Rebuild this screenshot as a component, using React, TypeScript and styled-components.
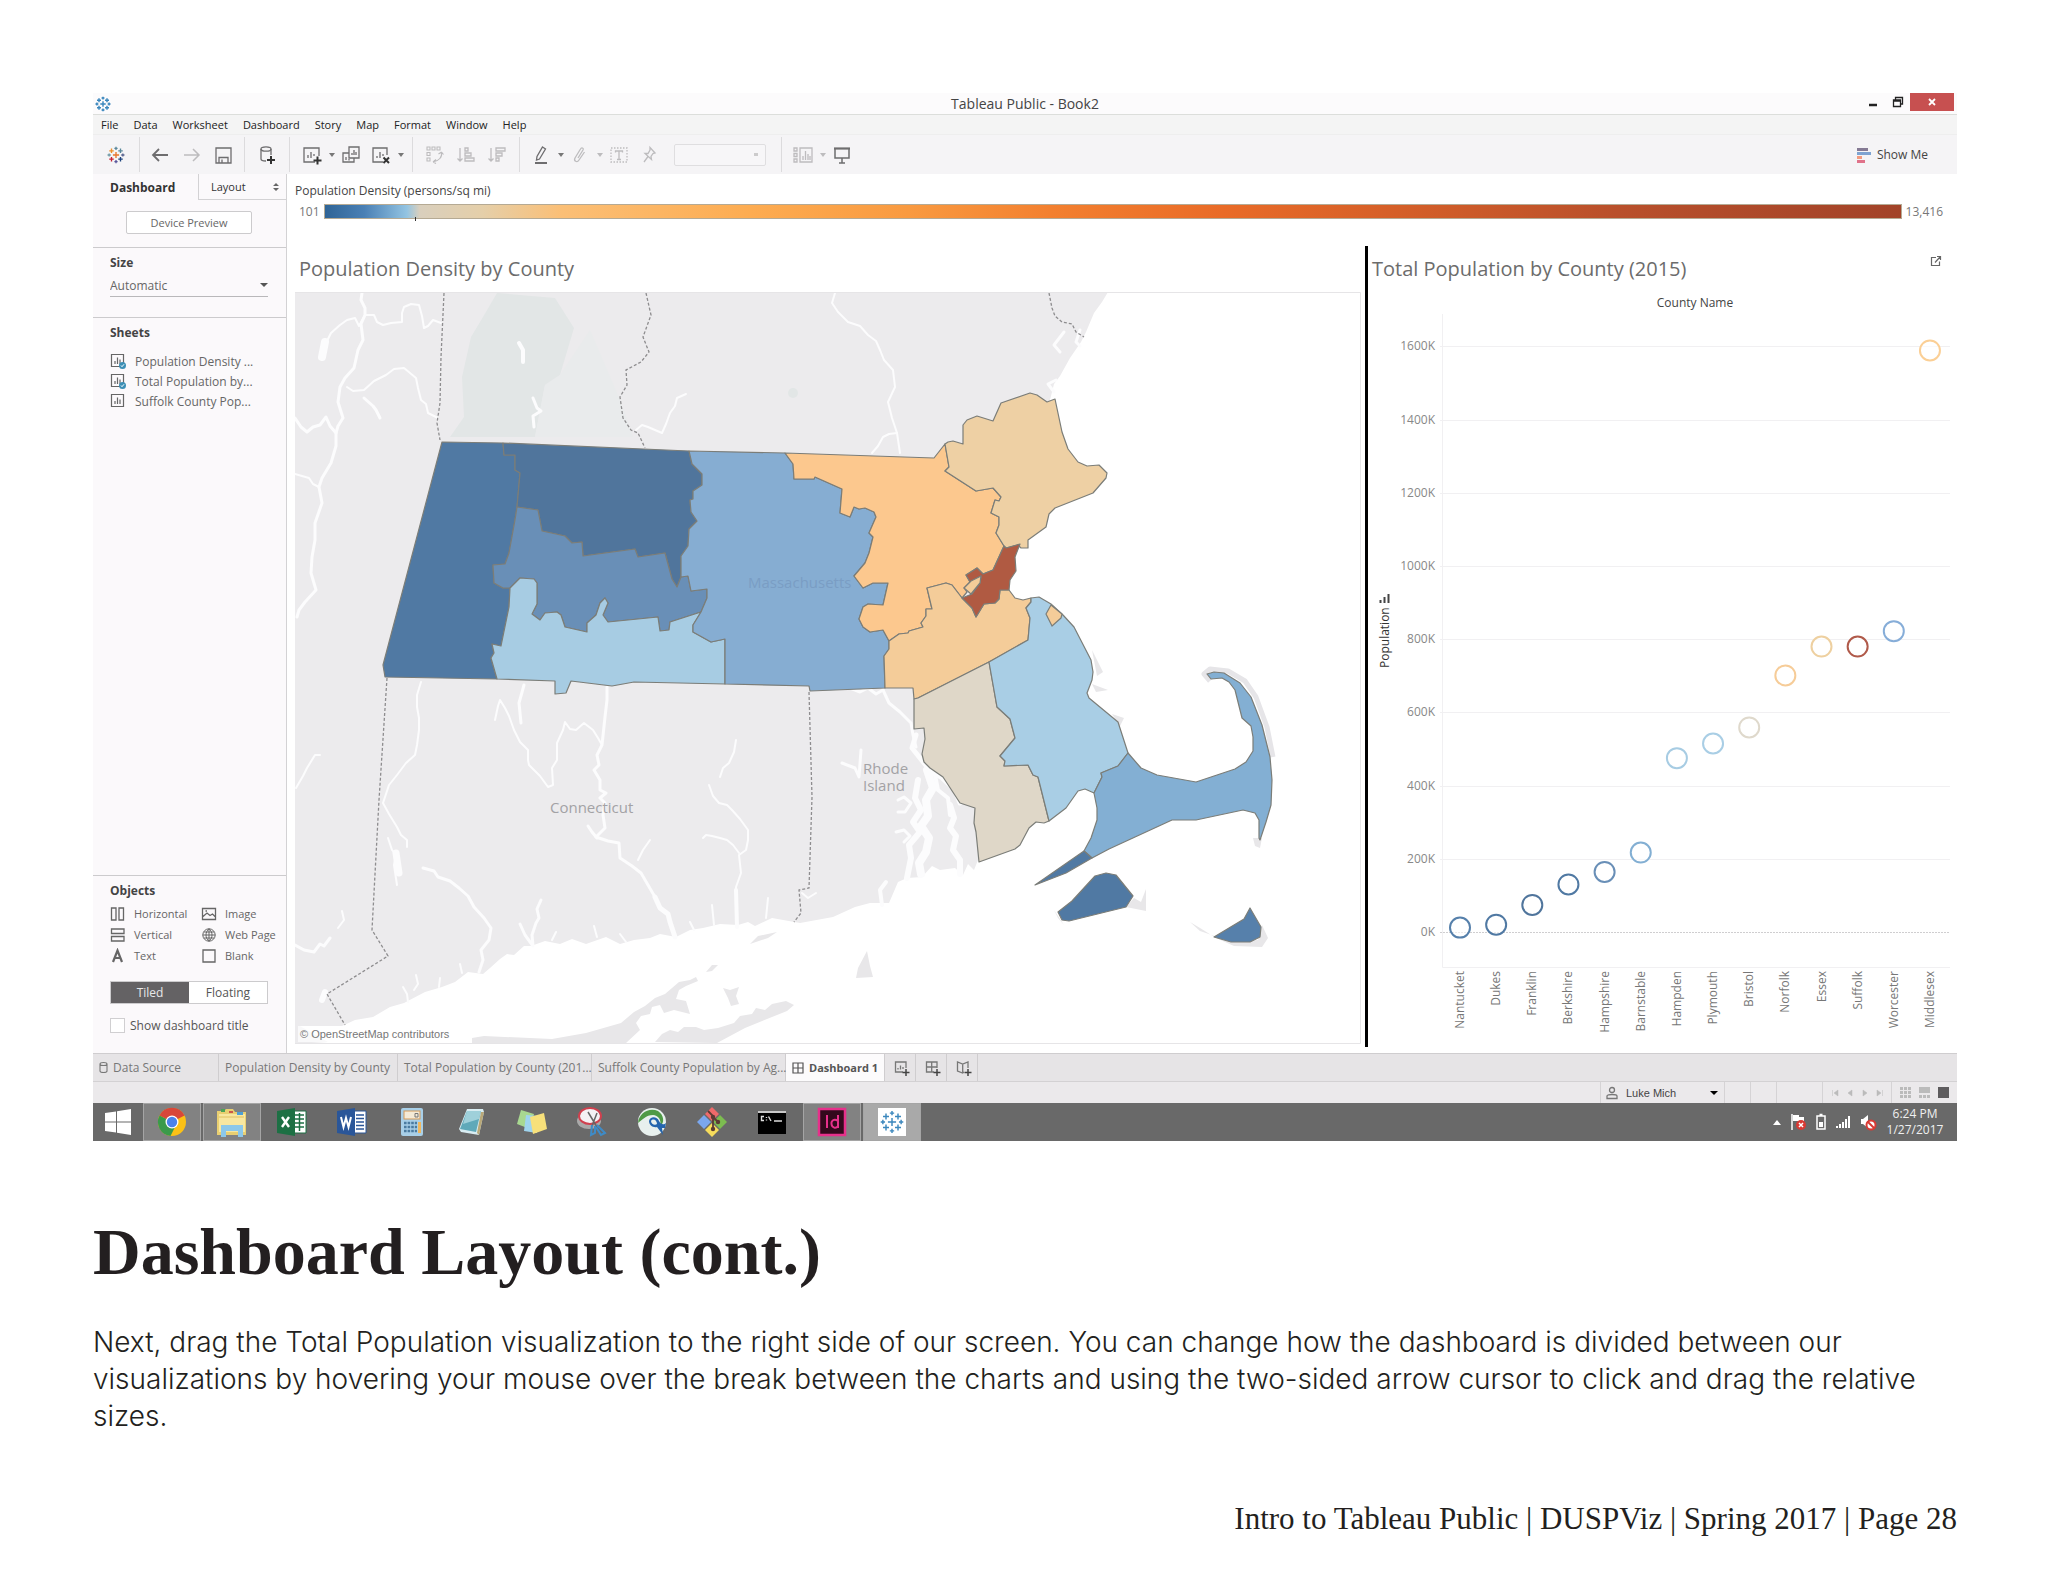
import React from "react";
import styled, { createGlobalStyle, css } from "styled-components";

const GlobalStyle = createGlobalStyle`
  *, *::before, *::after { box-sizing: border-box; }
  body { margin: 0; background: #fff; }
  button, select, input { font: inherit; color: inherit; margin: 0; }
`;

const ui = `"Open Sans", "Noto Sans", sans-serif`;

/* ---------- page ---------- */

const Page = styled.main`
  padding: 93px 91px 48px 93px;
  font-family: ${ui};
`;

const Heading = styled.h1`
  margin: 73px 0 0;
  font: 700 66px/76px "Liberation Serif", serif;
  color: #231f20;
`;

const Paragraph = styled.p`
  margin: 34px 0 0;
  font: 300 28px/37px Inter, "Liberation Sans", sans-serif;
  color: #231f20;
`;

const Footer = styled.footer`
  margin-top: 64px;
  text-align: right;
  font: 400 31px/40px "Liberation Serif", serif;
  color: #231f20;
`;

/* ---------- application window ---------- */

const Window = styled.section`
  background: #fff;
  color: #444;
`;

const TitleBar = styled.header`
  display: grid;
  grid-template-columns: 1fr auto 1fr;
  align-items: center;
  height: 22px;
  background: #fcfbfc;
  border-bottom: 1px solid #dcdedb;
`;

const AppMark = styled.span`
  display: flex;
  padding-left: 2px;
`;

const WindowTitle = styled.span`
  font-size: 14px;
  line-height: 20px;
  color: #444;
`;

const WindowControls = styled.div`
  display: flex;
  justify-content: flex-end;
  align-items: flex-start;
  height: 21px;
  padding-right: 3px;
`;

const WindowButton = styled.button<{ $close?: boolean }>`
  display: flex;
  align-items: center;
  justify-content: center;
  width: ${(p) => (p.$close ? 44 : 25)}px;
  height: 18px;
  padding: 0;
  border: 0;
  color: ${(p) => (p.$close ? "#fff" : "#222")};
  background: ${(p) => (p.$close ? "#c75050" : "transparent")};
`;

const MenuBar = styled.nav`
  display: flex;
  align-items: center;
  gap: 15px;
  height: 20px;
  padding-left: 8px;
  background: #f4f4f4;
  border-bottom: 1px solid #eeeeee;
`;

const MenuItem = styled.button`
  padding: 0;
  border: 0;
  background: none;
  font-size: 11px;
  line-height: 18px;
  color: #222;
`;

const ToolBar = styled.div`
  display: flex;
  height: 39px;
  padding: 2px 0;
  background: #f5f4f6;
`;

const ToolGroup = styled.div<{ $pad?: number; $gap?: number; $last?: boolean }>`
  display: flex;
  align-items: center;
  gap: ${(p) => p.$gap ?? 0}px;
  padding: 0 ${(p) => p.$pad ?? 6}px;
  border-right: ${(p) => (p.$last ? "0" : "1px solid #dcdbdd")};
`;

const ToolButton = styled.button<{ $dim?: boolean }>`
  display: flex;
  align-items: center;
  justify-content: center;
  width: 30px;
  height: 28px;
  padding: 0;
  border: 0;
  background: none;
  color: ${(p) => (p.$dim ? "#bdbcbe" : "#6e6d6f")};
`;

const Caret = styled.span<{ $dim?: boolean }>`
  width: 9px;
  display: flex;
  justify-content: center;
  &::after {
    content: "";
    border: 3px solid transparent;
    border-top: 4px solid ${(p) => (p.$dim ? "#bdbcbe" : "#777")};
    border-bottom: 0;
  }
`;

const ToolSelect = styled.select`
  width: 92px;
  height: 22px;
  margin: 0 9px 0 10px;
  border: 1px solid #d6d5d7;
  border-radius: 2px;
  appearance: none;
  background: #f8f7f9 linear-gradient(#bbb, #bbb) no-repeat right 7px center / 4px 3px;
`;

const ShowMe = styled.button`
  display: flex;
  align-items: center;
  gap: 6px;
  margin-left: auto;
  padding: 0 29px 0 0;
  border: 0;
  background: none;
  font-size: 12px;
  color: #444;
`;

const Workspace = styled.div`
  display: grid;
  grid-template-columns: 194px minmax(0, 1fr);
`;

/* ---------- side bar ---------- */

const SideBar = styled.aside`
  display: flex;
  flex-direction: column;
  background: #fbf9fb;
  border-right: 1px solid #d3d2d4;
`;

const SideTabs = styled.div`
  display: grid;
  grid-template-columns: 105px 1fr;
  height: 26px;
`;

const SideTab = styled.button<{ $active?: boolean }>`
  display: flex;
  align-items: center;
  justify-content: space-between;
  padding: 0 7px 0 ${(p) => (p.$active ? 17 : 12)}px;
  border: 0;
  background: none;
  font-size: ${(p) => (p.$active ? 12 : 11)}px;
  font-weight: ${(p) => (p.$active ? 700 : 400)};
  color: #333;
  ${(p) =>
    !p.$active &&
    css`
      border-left: 1px solid #d3d2d4;
      border-bottom: 1px solid #d3d2d4;
    `}
`;

const PreviewArea = styled.div`
  padding: 11px 0 13px 33px;
  border-bottom: 1px solid #cccbcd;
`;

const PreviewButton = styled.button`
  display: block;
  width: 126px;
  height: 23px;
  padding: 0;
  border: 1px solid #cccbcd;
  border-radius: 2px;
  background: #fff;
  font-size: 11px;
  color: #666;
`;

const Section = styled.section<{ $bottom?: number; $last?: boolean }>`
  padding: 6px 17px ${(p) => p.$bottom ?? 0}px;
  ${(p) => (p.$last ? "margin-top: auto; border-top" : "border-bottom")}: 1px solid #cccbcd;
`;

const SheetSection = styled.section`
  padding: 6px 17px 0;
`;

const SectionTitle = styled.h2`
  margin: 0;
  font-size: 12px;
  line-height: 17px;
  font-weight: 700;
  color: #444;
`;

const SizeSelect = styled.div`
  position: relative;
  margin-top: 3px;
  width: 158px;
  border-bottom: 1px solid #b9b8ba;
  &::after {
    content: "";
    position: absolute;
    right: 0;
    top: 9px;
    border: 4px solid transparent;
    border-top: 4px solid #555;
    border-bottom: 0;
    pointer-events: none;
  }
  select {
    display: block;
    width: 100%;
    height: 22px;
    padding: 0;
    border: 0;
    background: none;
    appearance: none;
    font-size: 12px;
    color: #666;
  }
`;

const SheetList = styled.ul`
  list-style: none;
  margin: 10px 0 0;
  padding: 0;
`;

const SheetItem = styled.li`
  display: flex;
  align-items: center;
  gap: 9px;
  height: 20px;
  font-size: 12px;
  white-space: nowrap;
  color: #666;
`;

const ObjectGrid = styled.div`
  display: grid;
  grid-template-columns: 91px 1fr;
  grid-auto-rows: 21px;
  margin-top: 4px;
`;

const ObjectItem = styled.button`
  display: flex;
  align-items: center;
  gap: 8px;
  padding: 0;
  border: 0;
  background: none;
  font-size: 11px;
  white-space: nowrap;
  color: #666;
`;

const Toggle = styled.div`
  display: flex;
  width: 158px;
  height: 23px;
  margin-top: 15px;
  border: 1px solid #cccbcd;
`;

const ToggleButton = styled.button<{ $on?: boolean }>`
  flex: 1;
  padding: 0;
  border: 0;
  font-size: 12px;
  line-height: 20px;
  background: ${(p) => (p.$on ? "#646264" : "#fff")};
  color: ${(p) => (p.$on ? "#e8e8e8" : "#555")};
`;

const TitleCheck = styled.label`
  display: flex;
  align-items: center;
  gap: 5px;
  margin: 12px 0 18px;
  font-size: 12px;
  line-height: 19px;
  color: #555;
  input {
    appearance: none;
    width: 15px;
    height: 15px;
    border: 1px solid #d0cfd1;
    background: #fff;
  }
`;

/* ---------- dashboard ---------- */

const Board = styled.div`
  padding: 9px 0 6px 8px;
  background: #fff;
`;

const LegendTitle = styled.div`
  font-size: 12px;
  line-height: 16px;
  color: #444;
`;

const LegendRow = styled.div`
  display: flex;
  align-items: center;
  gap: 4px;
  height: 15px;
  margin: 5px 14px 27px 4px;
  font-size: 12px;
  line-height: 15px;
  color: #777;
`;

const LegendBar = styled.div`
  position: relative;
  flex: 1;
  height: 15px;
  border: 1px solid #b5aa94;
  background: linear-gradient(
    90deg,
    #2f6496 0%, #4a80b5 2.5%, #93c4e2 5.2%, #d9cfbd 6%, #e5cfa9 10%,
    #fbbf76 15%, #fdac51 27%, #f99a40 37%, #f3802f 46%, #e96b27 57%,
    #d55f28 68%, #b9502b 82%, #a24328 100%
  );
  &::after {
    content: "";
    position: absolute;
    left: calc(6% - 4px);
    bottom: -3px;
    width: 1px;
    height: 4px;
    background: #333;
  }
`;

const Sheets = styled.div`
  display: grid;
  grid-template-columns: minmax(0, 1070fr) 3px minmax(0, 589fr);
`;

const Divider = styled.div`
  background: #000;
`;

const SheetTitle = styled.h3`
  margin: 0;
  padding: 9px 4px;
  font-size: 20px;
  line-height: 28px;
  font-weight: 400;
  color: #6c6c6c;
`;

const ChartHead = styled.div`
  display: flex;
  justify-content: space-between;
  align-items: flex-start;
  padding-right: 15px;
  color: #666;
`;

const OpenButton = styled.button`
  display: flex;
  margin-top: 9px;
  padding: 0;
  border: 0;
  background: none;
`;

const MapFrame = styled.div`
  padding: 0 4px 3px 0;
  svg {
    display: block;
    width: 100%;
    height: auto;
  }
`;

const ChartFrame = styled.div`
  svg {
    display: block;
    width: 100%;
    height: auto;
  }
`;

/* ---------- sheet tabs, status row, task bar ---------- */

const TabRow = styled.div`
  display: flex;
  height: 29px;
  background: #e6e4e6;
  border-top: 1px solid #cfcdcf;
  border-bottom: 1px solid #d3d1d3;
`;

const Tab = styled.button<{ $w: number; $active?: boolean; $center?: boolean }>`
  display: flex;
  align-items: center;
  justify-content: ${(p) => (p.$center ? "center" : "flex-start")};
  gap: 5px;
  width: ${(p) => p.$w}px;
  padding: 0 0 0 ${(p) => (p.$center ? 4 : 6)}px;
  border: 0;
  border-right: 1px solid #cfcdcf;
  background: ${(p) => (p.$active ? "#fcfbfc" : "transparent")};
  font-size: ${(p) => (p.$active ? 11 : 12)}px;
  font-weight: ${(p) => (p.$active ? 700 : 400)};
  white-space: nowrap;
  color: ${(p) => (p.$active ? "#555" : "#777")};
`;

const StatusRow = styled.div`
  display: flex;
  justify-content: flex-end;
  height: 21px;
  background: #ebe9eb;
`;

const StatusCell = styled.div<{ $w: number; $spread?: boolean }>`
  display: flex;
  align-items: center;
  justify-content: ${(p) => (p.$spread ? "space-around" : "flex-start")};
  width: ${(p) => p.$w}px;
  padding: 0 4px;
  border-left: 1px solid #d5d3d5;
  color: #bbb;
`;

const UserSelect = styled.select`
  flex: 1;
  height: 18px;
  padding: 0;
  border: 0;
  appearance: none;
  background: none;
  font: 11px "Liberation Sans", sans-serif;
  color: #444;
`;

const UserIcon = styled.span`
  display: flex;
  width: 21px;
  color: #777;
`;

const UserCaret = styled.span`
  margin-right: 2px;
  border: 4px solid transparent;
  border-top: 4px solid #000;
  border-bottom: 0;
`;

const TaskBar = styled.div`
  display: flex;
  height: 38px;
  background: #696969;
`;

const StartButton = styled.button`
  display: flex;
  align-items: center;
  justify-content: center;
  width: 49px;
  padding: 0;
  border: 0;
  background: none;
`;

const TaskButton = styled.button<{ $open?: boolean; $front?: boolean }>`
  display: flex;
  align-items: center;
  justify-content: center;
  width: 58px;
  margin: 0 1px;
  padding: 0;
  border: ${(p) => (p.$open || p.$front ? "1px solid #a5a5a5" : "0")};
  background: ${(p) => (p.$front ? "#a9a9a9" : p.$open ? "#828282" : "none")};
`;

const Tray = styled.div`
  display: flex;
  align-items: center;
  gap: 8px;
  margin-left: auto;
  padding-right: 12px;
  color: #fff;
`;

const Clock = styled.time`
  width: 60px;
  text-align: center;
  font-size: 12px;
  line-height: 16px;
  color: #f0f0f0;
`;

/* ---------- icons ---------- */

const Svg = ({ w = 20, h = 20, children }: { w?: number; h?: number; children: React.ReactNode }) => (
  <svg width={w} height={h} viewBox={`0 0 ${w} ${h}`} fill="none" stroke="currentColor" strokeWidth="1.3" aria-hidden="true">
    {children}
  </svg>
);

const plus = (x: number, y: number, r: number) => `M${x - r} ${y}H${x + r}M${x} ${y - r}V${y + r}`;

const marks: [number, number, number, string][] = [
  [10, 10, 3.4, "#e8762d"],
  [10, 2.6, 1.8, "#5b879b"],
  [10, 17.4, 1.8, "#59579b"],
  [2.4, 10, 1.8, "#7199a6"],
  [17.6, 10, 1.8, "#5c6692"],
  [5, 5.4, 2.5, "#eb912c"],
  [15, 5.4, 2.5, "#59879b"],
  [5, 14.6, 2.5, "#c72035"],
  [15, 14.6, 2.5, "#1f447e"],
];

const TableauMark = ({ size = 20, mono }: { size?: number; mono?: string }) => (
  <svg width={size} height={size} viewBox="0 0 20 20" aria-hidden="true">
    {marks.map(([x, y, r, c]) => (
      <path key={`${x}-${y}`} d={plus(x, y, r)} stroke={mono ?? c} strokeWidth={mono ? 1.8 : 1.5} />
    ))}
  </svg>
);

const BackIcon = () => <Svg><path d="M18 10H3M9 4L3 10L9 16" strokeWidth="1.8" /></Svg>;
const ForwardIcon = () => <Svg><path d="M2 10H17M11 4L17 10L11 16" strokeWidth="1.5" /></Svg>;
const SaveIcon = () => <Svg><path d="M2 3H17V18H2ZM5 18V12.500H14V18M8 14.500V18" /></Svg>;
const AddDataIcon = () => (
  <Svg>
    <ellipse cx="9" cy="4" rx="5" ry="2.200" />
    <path d="M4 4V14C4 15.500 7 16 9 16M14 4V10" />
    <path d={plus(14, 15, 4)} stroke="#333" strokeWidth="2" />
  </Svg>
);
const AddSheetIcon = () => (
  <Svg>
    <path d="M13 17H2V3H17V11M6 13V10M9 13V7M12 11V9" />
    <path d={plus(15.5, 15.5, 4)} stroke="#333" strokeWidth="2" />
  </Svg>
);
const DuplicateIcon = () => <Svg><path d="M8 2H18V13H8ZM8 8H2V17H13V13M11 10V8M13 10V5M15 10V7M5 15V12M8 15.500V14" /></Svg>;
const ClearIcon = () => (
  <Svg>
    <path d="M12 17H2V3H16V10M6 13V11M9 13V7M12 11V9" />
    <path d="M12.500 12.500L18 18M18 12.500L12.500 18" stroke="#333" strokeWidth="2" />
  </Svg>
);
const SwapIcon = () => <Svg><path d="M2 2H5V5H2ZM7 2H10V5H7ZM12 2H15V5H12ZM2 7.500H5V10.500H2ZM2 13H5V16H2ZM16.500 7C17.500 12 14 16 8 17M8 17L11 14.500M8 17L11 18.500M16.500 7L13.500 9M16.500 7L18.500 9.500" strokeWidth="1.100" /></Svg>;
const SortAscIcon = () => <Svg><path d="M4 3V16M1.500 13.500L4 16L6.500 13.500M9 3H12V6H9ZM9 8H15V11H9ZM9 13H18V16H9Z" /></Svg>;
const SortDescIcon = () => <Svg><path d="M4 3V16M1.500 13.500L4 16L6.500 13.500M9 3H18V6H9ZM9 8H15V11H9ZM9 13H12V16H9Z" /></Svg>;
const MarkerIcon = () => (
  <Svg>
    <path d="M11.500 2L14.500 4L8.500 14L5.500 15L6 11.500Z" />
    <path d="M4 18H16" strokeWidth="2" />
  </Svg>
);
const ClipIcon = () => <Svg><path d="M8 13L13 5C14 3 11.500 2 10.500 4L5 13C3.500 16 7 18 9 15L14.500 7" /></Svg>;
const TextBoxIcon = () => (
  <Svg>
    <path d="M2 3H18V17H2Z" strokeDasharray="1.500 1.500" />
    <path d="M6.500 7.500V6H13.500V7.500M10 6V14.500M8 14.500H12" />
  </Svg>
);
const PinIcon = () => <Svg><path d="M11 2.500L16 8L14 8.500L12 11.500L12.500 14.500L6 8.500L9 8.500L11 5ZM9 11.500L5 17" /></Svg>;
const CardsIcon = () => <Svg><path d="M1 3H4V6H1ZM1 8.500H4V11.500H1ZM1 14H4V17H1ZM7 3H19V17H7ZM10 15V11M12.500 15V6M15 15V9M17 15V11" /></Svg>;
const PresentIcon = () => (
  <Svg>
    <path d="M3 4V13H17V4M10 13V18M7 18H13" strokeWidth="1.500" />
    <path d="M2 3.500H18" strokeWidth="2.200" />
  </Svg>
);
const ShowMeIcon = () => (
  <svg width="14" height="16" viewBox="0 0 14 16" aria-hidden="true">
    <path d="M0 1H11V4H0Z" fill="#857a94" />
    <path d="M0 5H14V8H0Z" fill="#7ea3d1" />
    <path d="M0 9H5V12H0Z" fill="#f29b80" />
    <path d="M0 13H8V16H0Z" fill="#e0728a" />
  </svg>
);
const SheetIcon = ({ used }: { used?: boolean }) => (
  <Svg w={16} h={16}>
    <path d="M1.500 1.500H13.500V13.500H1.500ZM5 11V8M7.500 11V4.500M10 11V6.500" strokeWidth="1.200" />
    {used && <circle cx="12.500" cy="12.500" r="3.500" fill="#3d8fb5" stroke="none" />}
    {used && <path d="M11 12.500L12 13.700L14 11.300" stroke="#fff" strokeWidth="1" />}
  </Svg>
);
const objectPaths: Record<string, React.ReactNode> = {
  Horizontal: <path d="M1.500 2H6V14H1.500ZM9 2H13.500V14H9Z" />,
  Vertical: <path d="M1.500 2H14V6.500H1.500ZM1.500 9.500H14V14H1.500Z" />,
  Text: <path d="M3 14L7.500 2.500L12 14M4.500 10H10.500" strokeWidth="2.200" />,
  Image: <path d="M1.500 2.500H14.500V13.500H1.500ZM2 10.500L6 7L9 9.500L11.500 8L14 10.500M4.500 5H6" />,
  "Web Page": <path d="M8 1.800A6.200 6.200 0 1 0 8 14.200A6.200 6.200 0 1 0 8 1.800ZM8 1.800V14.200M1.800 8H14.200M2.800 5H13.200M2.800 11H13.200M8 1.800C4 5 4 11 8 14.200M8 1.800C12 5 12 11 8 14.200" strokeWidth="1" />,
  Blank: <path d="M2 2H14V14H2Z" />,
};
const DataIcon = () => <Svg w={9} h={13}><path d="M1 3C1 1 8 1 8 3V10C8 12 1 12 1 10ZM1 3C1 5 8 5 8 3" strokeWidth="1.100" /></Svg>;
const GridIcon = () => <Svg w={12} h={12}><path d="M1 1H11V11H1ZM6 1V11M1 6H11" strokeWidth="1.200" /></Svg>;
const NewTabIcon = ({ kind }: { kind: "sheet" | "grid" | "story" }) => (
  <Svg w={16} h={16}>
    {kind === "sheet" && <path d="M9 12H1.500V2H12V8M4 9.500V8M6.500 9.500V5.500M9 9V7" />}
    {kind === "grid" && <path d="M9 12H1.500V2H12V8M6.700 2V12M1.500 7H12" />}
    {kind === "story" && <path d="M8 12L6.700 13L1.500 11V2L6.700 4L12 2V8M6.700 4V13" />}
    <path d={plus(12, 12.5, 3.5)} stroke="#444" strokeWidth="1.500" />
  </Svg>
);
const OpenIcon = () => <Svg w={12} h={12}><path d="M6 2.500H1.500V10.500H9.500V6.500M5 7.500L10 2M7 1.500H10.500V5" strokeWidth="1.200" /></Svg>;

const taskIcons: { name: string; open?: boolean; front?: boolean; art: React.ReactNode }[] = [
  {
    name: "Chrome",
    open: true,
    art: (
      <>
        <circle cx="15" cy="15" r="14" fill="#fbc116" />
        <path d="M15 15L2.500 8.500A14 14 0 0 1 27.500 8.500Z" fill="#d8473a" />
        <path d="M15 15L2.500 8.500A14 14 0 0 0 13.500 29L19 18Z" fill="#3a9a4b" />
        <circle cx="15" cy="15" r="6.500" fill="#fff" />
        <circle cx="15" cy="15" r="5.200" fill="#4a82ea" />
      </>
    ),
  },
  {
    name: "File Explorer",
    open: true,
    art: (
      <>
        <path d="M0 4H7L9 2H16L18 5H29V28H0Z" fill="#e9cf71" />
        <path d="M2 7H28V25H2Z" fill="#f8e7a0" />
        <path d="M4 2H8V5H4Z" fill="#4ba356" />
        <path d="M12 4H16V6H12Z" fill="#cc574b" />
        <path d="M20 5H26V8H20Z" fill="#4c9fd6" />
        <path d="M4 18H26V30H21V24H9V30H4Z" fill="#8cc8ea" />
        <path d="M2 10H27" stroke="#e0c060" />
      </>
    ),
  },
  {
    name: "Excel",
    art: (
      <>
        <path d="M15 4H29V26H15Z" fill="#fff" stroke="#1d7044" />
        <path d="M18 8H27M18 12H27M18 16H27M18 20H27M22.500 6V24" stroke="#1d7044" strokeWidth="1.500" />
        <path d="M0 4L18 1V29L0 26Z" fill="#1d7044" />
        <path d="M5 10L12 20M12 10L5 20" stroke="#fff" strokeWidth="2.400" />
      </>
    ),
  },
  {
    name: "Word",
    art: (
      <>
        <path d="M15 4H29V26H15Z" fill="#fff" stroke="#2a5699" />
        <path d="M19 8H27M19 11.500H27M19 15H27M19 18.500H27M19 22H27" stroke="#2a5699" strokeWidth="1.500" />
        <path d="M0 4L18 1V29L0 26Z" fill="#2a5699" />
        <path d="M4 10L6.500 20L9 11L11.500 20L14 10" stroke="#fff" strokeWidth="2" fill="none" />
      </>
    ),
  },
  {
    name: "Calculator",
    art: (
      <>
        <rect x="4" y="1" width="22" height="28" rx="2" fill="#a8cfe8" />
        <rect x="7" y="4" width="16" height="8" fill="#f4ead6" stroke="#d29a5a" />
        <path d="M18 6.500H21V10H18Z" stroke="#777" fill="none" />
        <path d="M7 16H20M7 20H20M7 24H20" stroke="#4b7ba0" strokeWidth="2.400" strokeDasharray="2.600 1" />
        <path d="M21 15H24V26H21Z" fill="#f0b75e" />
      </>
    ),
  },
  {
    name: "Notepad",
    art: (
      <>
        <path d="M10 2H26L27 5L22 28L4 25L2 22Z" fill="#d9edf2" />
        <path d="M10 4H24L19 25L3 22Z" fill="#5fa9b9" />
        <path d="M10 4H24L22 12L6 17Z" fill="#9fd0da" />
        <path d="M27 5L22 28L20 26L24 5Z" fill="#b9a878" />
      </>
    ),
  },
  {
    name: "Sticky Notes",
    art: (
      <>
        <path d="M4 3L17 7L13 22L0 17Z" fill="#a8d890" />
        <path d="M9 8L21 9L20 26L7 24Z" fill="#9fd4ee" />
        <path d="M13 10L27 6L30 22L16 27Z" fill="#f7e07a" />
      </>
    ),
  },
  {
    name: "Snipping Tool",
    art: (
      <>
        <ellipse cx="12" cy="14" rx="12" ry="8" fill="#a9a9a9" />
        <ellipse cx="13" cy="9" rx="11" ry="8" fill="#f4f2f4" stroke="#d0404e" strokeWidth="2" />
        <path d="M11 5L20 20M20 6L15 19" stroke="#666" strokeWidth="1.500" />
        <path d="M20 18L28 26L24 28L19 20M15 18L14 28L18 26L18 19" stroke="#3e8bc7" strokeWidth="2" fill="none" />
      </>
    ),
  },
  {
    name: "Browser",
    art: (
      <>
        <circle cx="15" cy="15" r="14" fill="#e8f0ee" />
        <path d="M1 16C2 5 13 0 21 4C27 8 28 16 23 19C25 13 21 8 16 8C9 8 5 13 1 16Z" fill="#4f9a46" />
        <path d="M12 14C13 9 20 9 22 14C24 18 27 18 29 16L28 21L25 21L26 28L20 20C16 21 12 18 12 14ZM14 14C14 17 18 19 20 17C20 13 16 11 14 14Z" fill="#2465ae" fillRule="evenodd" />
      </>
    ),
  },
  {
    name: "Git",
    art: (
      <>
        <path d="M15 0L22 7L15 14L8 7Z" fill="#ef6a6a" />
        <path d="M7 8L14 15L7 22L0 15Z" fill="#7ba7ee" />
        <path d="M23 8L30 15L23 22L16 15Z" fill="#7cbc50" />
        <path d="M15 16L22 23L15 30L8 23Z" fill="#f6dc5c" />
        <path d="M11 4L16 9V22M16 10L21 15" stroke="#5b3b34" strokeWidth="1.800" fill="none" />
        <circle cx="16" cy="10" r="2.200" fill="#5b3b34" />
        <circle cx="21" cy="15" r="2.200" fill="#5b3b34" />
        <circle cx="16" cy="22" r="2.200" fill="#5b3b34" />
      </>
    ),
  },
  {
    name: "Command Prompt",
    art: (
      <>
        <path d="M1 4H29V27H1Z" fill="#000" />
        <path d="M1 4H29V6H1Z" fill="#c8c8c8" />
        <path d="M7 9.500H4.500V13.500H7M9.500 10V11M9.500 12.500V13.500M11.500 9.500L14 14M17 14H25" stroke="#ddd" strokeWidth="1.400" fill="none" />
      </>
    ),
  },
  {
    name: "InDesign",
    open: true,
    art: (
      <>
        <path d="M2 2H28V28H2Z" fill="#33091c" stroke="#e7308b" strokeWidth="2.500" />
        <path d="M10 8V21M21 8V21M21 14C17 11 14 14 14.500 17C15 21 19 22 21 19" stroke="#e7308b" strokeWidth="2" fill="none" />
      </>
    ),
  },
  {
    name: "Tableau Public",
    front: true,
    art: (
      <>
        <path d="M1 1H29V29H1Z" fill="#fff" />
        <g transform="translate(3 3) scale(1.200)">
          {marks.map(([x, y, r]) => (
            <path key={`${x}-${y}`} d={plus(x, y, r)} stroke="#3b87bd" strokeWidth="1.200" />
          ))}
        </g>
      </>
    ),
  },
];

/* ---------- map ---------- */

const counties: { name: string; fill: string; d: string }[] = [
  { name: "Berkshire", fill: "#5079a3", d: "442,442 503,443 504,455 515,455 515,470 520,473 517,507 515,520 509,553 505,564 493,565 494,583 503,588 510,588 509,607 501,646 492,644 494,653 491,658 497,679 385,677 383,665" },
  { name: "Franklin", fill: "#50759c", d: "503,443 689,451 692,464 702,474 702,485 693,491 693,499 690,500 691,512 697,521 689,529 688,546 681,556 681,577 677,587 672,579 665,553 638,557 635,549 583,556 582,542 572,543 565,536 542,531 538,510 517,507 520,473 515,470 515,455 504,455" },
  { name: "Hampshire", fill: "#698fb7", d: "517,507 538,510 542,531 565,536 572,543 582,542 583,556 635,549 638,557 665,553 672,579 677,587 681,577 688,576 691,591 707,589 707,598 701,612 670,622 669,630 660,631 658,617 608,622 603,615 608,603 605,598 600,603 596,615 587,623 587,632 565,627 561,615 557,612 545,613 540,620 532,614 537,604 537,583 534,579 520,578 510,588 503,588 494,583 493,565 505,564 509,553 515,520" },
  { name: "Hampden", fill: "#a7cce3", d: "510,588 520,578 534,579 537,583 537,604 532,614 540,620 545,613 557,612 561,615 565,627 587,632 587,623 596,615 600,603 605,598 608,603 603,615 608,622 658,617 660,631 669,630 670,622 701,612 693,625 693,632 711,642 725,639 725,684 634,682 612,686 571,681 566,693 555,694 555,681 497,679 491,658 494,653 492,644 501,646 509,607" },
  { name: "Worcester", fill: "#86add2", d: "689,451 785,453 793,464 794,479 814,479 815,477 842,489 840,513 850,517 854,507 859,509 865,508 874,512 876,517 869,533 873,537 869,553 865,563 854,576 863,588 873,583 888,583 883,605 868,604 863,607 859,619 863,627 870,632 883,630 889,641 889,649 884,656 885,688 810,691 809,686 725,684 725,639 711,642 693,632 693,625 701,612 707,598 707,589 691,591 688,576 681,577 681,556 688,546 689,529 697,521 691,512 690,500 693,499 693,491 702,485 702,474 692,464" },
  { name: "Middlesex", fill: "#fcc88e", d: "785,453 934,458 945,444 949,467 945,471 976,491 993,488 1001,497 999,501 995,500 991,513 999,517 999,525 996,533 1004,546 993,570 983,574 977,568 966,575 970,582 964,588 967,592 962,598 952,585 946,583 927,588 932,609 926,609 926,616 921,623 923,627 909,631 908,633 899,634 889,641 883,630 870,632 863,627 859,619 863,607 868,604 883,605 888,583 873,583 863,588 854,576 865,563 869,553 873,537 869,533 876,517 874,512 865,508 859,509 854,507 850,517 840,513 842,489 815,477 814,479 794,479 793,464" },
  { name: "Essex", fill: "#eed0a4", d: "945,444 948,442 953,441 963,444 963,425 967,420 977,416 993,421 1001,403 1030,393 1037,395 1047,402 1055,399 1062,432 1068,449 1078,462 1087,466 1099,465 1107,473 1106,478 1093,493 1055,508 1049,514 1046,527 1028,540 1028,548 1021,548 1018,545 1006,548 1004,546 996,533 999,525 999,517 991,513 995,500 999,501 1001,497 993,488 976,491 945,471 949,467" },
  { name: "Norfolk", fill: "#f4cc99", d: "889,641 899,634 908,633 909,631 923,627 921,623 926,616 926,609 932,609 927,588 946,583 952,585 962,598 972,608 976,617 984,604 995,603 999,599 1000,590 1009,590 1015,598 1023,600 1031,598 1031,602 1026,608 1030,618 1028,640 989,662 918,698 914,699 913,688 885,688 884,656 889,649" },
  { name: "Suffolk", fill: "#b05a42", d: "1004,546 1006,548 1020,544 1015,557 1016,571 1010,580 1009,590 1000,590 999,599 995,603 984,604 976,617 972,608 962,598 972,594 980,583 981,576 970,582 966,575 977,568 983,574 993,570" },
  { name: "Brookline", fill: "#f4cc99", d: "964,588 971,581 981,576 980,583 971,594" },
  { name: "Bristol", fill: "#dfd7c8", d: "989,662 997,707 1010,719 1015,738 1000,756 1005,761 1004,766 1028,765 1033,775 1038,777 1049,821 1044,823 1036,822 1029,828 1020,845 1015,849 979,862 976,832 974,823 975,808 960,803 943,777 930,768 924,762 922,754 925,739 924,728 914,729 914,699 918,698" },
  { name: "Plymouth", fill: "#a9cee5", d: "989,662 1028,640 1030,618 1026,608 1031,602 1031,598 1039,597 1051,604 1063,615 1074,627 1091,660 1093,672 1092,680 1087,693 1089,698 1118,722 1128,753 1118,766 1101,773 1102,777 1094,793 1085,789 1078,791 1066,808 1049,821 1038,777 1033,775 1028,765 1004,766 1005,761 1000,756 1015,738 1010,719 997,707" },
  { name: "Cohasset", fill: "#f4cc99", d: "1051,605 1062,614 1061,618 1052,626 1046,614" },
  { name: "Barnstable", fill: "#83afd3", d: "1128,753 1141,768 1157,775 1196,782 1235,769 1246,762 1253,751 1253,737 1251,726 1242,718 1235,690 1229,682 1222,678 1211,679 1207,674 1214,672 1224,673 1240,683 1251,697 1262,725 1270,757 1272,780 1271,805 1266,822 1260,840 1259,838 1259,820 1255,813 1243,810 1196,820 1172,820 1109,849 1092,858 1084,851 1091,838 1097,820 1097,808 1094,793 1102,777 1101,773 1118,766" },
  { name: "Elizabeth Islands", fill: "#5079a3", d: "1084,851 1092,858 1066,873 1035,885" },
  { name: "Martha's Vineyard", fill: "#5079a3", d: "1058,912 1072,901 1095,876 1106,873 1116,875 1133,896 1126,907 1069,921 1062,920" },
  { name: "Nantucket", fill: "#5680ab", d: "1214,937 1244,919 1250,908 1261,927 1260,937 1250,942 1231,942" },
];

const land =
  "M295 292H1108L1102 302L1094 313L1086 332L1081 342L1070 358L1060 376L1054 384L1050 400L1000 540L1000 700L1010 800L980 855L974 870L968 864L963 875L955 868L940 870L932 866L922 877L907 878L898 882L889 903L870 903L855 907L833 917L800 923L772 918L755 926L748 922L738 925L720 924L703 928L690 930L676 937L660 934L650 938L634 940L620 944L606 937L586 944L572 939L560 944L545 941L531 946L524 946L514 955L507 954L500 959L490 968L483 974L468 972L455 982L442 987L425 992L404 1003L390 1007L373 1017L355 1020L342 1026L300 1026L328 1042L295 1044Z";

const islands = [
  "M472 1038L484 1036L552 1039L586 1033L621 1023L634 1012L645 1006L655 998L665 994L679 982L690 980L696 977L698 981L686 986L679 990L676 999L686 1001L690 1014L674 1010L664 1013L660 1005L652 1007L650 1014L641 1016L636 1023L640 1030L626 1043L560 1044L472 1043Z",
  "M655 1042L662 1034L670 1030L678 1032L684 1027L696 1027L704 1030L718 1028L734 1023L740 1016L752 1014L756 1008L765 1010L772 1004L786 1001L794 1005L787 1011L772 1017L745 1028L717 1043Z",
  "M723 988L730 990L739 987L736 996L739 1004L731 1006L728 998Z",
  "M706 972L712 965L718 965L712 971Z",
  "M750 944L758 936L777 932L768 938Z",
  "M867 951L870 966L873 977L856 978L858 968Z",
  "M1054 910L1064 925L1058 918ZM1126 907L1134 898L1141 902L1146 889V911Z",
  "M1190 922L1200 928L1216 938L1234 946L1262 947L1268 938L1262 925L1258 940L1232 942L1200 931Z",
  "M1253 838L1262 838L1260 848L1255 846Z",
  "M1092 650L1103 672L1097 676ZM1112 714L1124 718L1120 726ZM1092 684L1108 690L1096 692Z",
];

const rivers: [number, string][] = [
  [3, "362,293 361,300 365,308 365,315 361,324 363,340 358,350 354,368 345,378 340,387 338,402 343,418 338,426 336,433 336,446 331,463 322,478 319,487 322,503 315,523 315,540 312,557 311,573 316,590 305,602 299,610 297,617"],
  [2, "365,315 359,326 355,318 347,320 340,325 331,333 325,345"],
  [8, "325,342 322,357"],
  [2, "365,315 374,315 377,322 383,325 391,323 402,322 402,313 404,307 411,304 419,305 422,316 424,328 428,326 433,320 441,323"],
  [2, "347,387 353,391 364,390 374,381 386,375 394,369 404,368 416,378 418,388 421,400 426,404 428,413 438,418"],
  [3, "295,418 301,427 307,432 313,427 320,425 326,417 330,426 336,433"],
  [2, "295,474 302,476 309,478 313,484 319,487"],
  [3, "364,398 373,406 376,410 380,418"],
  [4, "519,343 523,350 523,362"],
  [3, "533,398 537,408 541,411 533,416 534,427"],
  [2, "686,394 677,398 675,406 670,413 666,424 662,433 648,427 642,425 636,430"],
  [2, "835,293 832,303 838,312 848,322 860,326 868,335 876,341 880,350 884,360 893,370 895,387 888,402 892,418 897,433 900,453"],
  [2, "897,433 889,434 883,437 878,446 872,453"],
  [2, "421,682 417,695 417,707 419,718 419,730 417,745 415,755 406,763 397,775 389,785 383,803 389,814 397,827 401,835 407,840 407,847"],
  [2, "388,838 392,850 396,855 394,865 397,885"],
  [7, "396,853 399,873"],
  [3, "423,868 434,871 438,877 450,881 459,888 468,896 474,907 484,918 491,928 489,940 481,950 483,960 479,972"],
  [2, "495,720 498,706 500,700 505,708 509,716 514,730 520,742 528,750 528,760 529,765 540,776 548,787 553,785 552,768 557,760 557,743 563,730 565,722 570,729 576,730 584,723 593,730 598,738 602,745"],
  [3, "607,687 607,700 605,717 602,745 597,755 599,765 594,770 600,780 600,790 606,793 600,798 605,803 603,815 605,828 596,837 608,841 619,843 620,858 632,866 641,873 648,885 655,897"],
  [5, "655,897 660,908 668,914 670,922 675,937"],
  [3, "588,826 592,832 597,838"],
  [3, "524,685 519,703 521,723"],
  [2, "736,740 734,752 729,763 723,768 720,777"],
  [2, "709,785 713,796 719,803 727,805 732,810 740,819 748,830 748,840 746,850 739,855 741,873 736,887 737,927"],
  [4, "736,890 737,927"],
  [2, "703,838 706,835 712,836 720,838 727,840 733,845 739,853"],
  [3, "541,900 537,909 539,918 536,923 532,935 533,946 525,935 520,924"],
  [2, "650,840 643,850 638,860"],
  [2, "296,788 303,776 307,768 315,755 320,755"],
  [3, "295,945 304,950 314,952 320,944 324,946 330,938"],
  [2, "342,911 344,920 338,928"],
  [6, "325,992 322,1000"],
  [2, "403,987 407,994 408,1002M416,975 418,984 414,990M440,978 439,987M460,964 462,973"],
  [2, "712,905 714,925M768,898 766,918M556,932 552,940M594,926 597,937M620,934 626,942M690,922 694,930"],
  [3, "842,763 855,768 859,777 861,750"],
  [2, "802,893 808,898 816,893"],
  [3, "850,688 860,692 868,688 876,694 883,690"],
  [3, "883,690 889,703 900,712 911,723 913,735 916,747"],
  [5, "916,735 912,748 924,763 932,773 941,777 955,790 960,803"],
  [3, "898,800 904,797 911,803 905,812 898,812M896,832 904,830 910,836 904,842"],
  [6, "918,780 915,798 921,810 913,822 920,832 909,845 911,858 907,878"],
  [8, "927,770 933,788 926,800 928,816 921,826 929,838 926,852 919,863 921,874"],
  [4, "935,775 938,790 948,798 950,815"],
  [6, "950,805 954,818 950,828 956,836 953,850 960,860 960,874"],
  [4, "886,882 880,890 882,905"],
  [3, "1056,380 1048,384 1054,392M1064,332 1054,345 1060,352M1080,330 1076,342 1080,346"],
];

const borders = [
  "444,293 441,357 440,403 437,423 440,440",
  "646,293 651,315 643,337 649,352 641,362 626,370 627,385 620,397 623,418 631,430 638,433 645,448",
  "387,678 379,800 372,930 388,956 327,994 345,1025",
  "809,692 812,797 809,888 799,890 801,913 794,922",
  "1049,293 1052,308 1055,316 1062,322 1072,324 1076,332 1084,337",
];

const points = (d: string) => "M" + d.split("M").map((s) => s.trim().replace(/ /g, "L")).join("M");

const DensityMap = () => (
  <svg viewBox="295 292 1066 752" role="img" aria-label="Population density by county" fontFamily={ui}>
    <path d={land} fill="#ecebed" />
    {islands.map((d) => <path key={d} d={d} fill="#e8e7e9" />)}
    <path d="M497 293L555 298L574 328L560 375L545 385L535 437H450L464 417L462 377L471 337L483 317Z" fill="#e2e6e6" />
    <path d="M560 375L590 330L620 400L633 437H535L545 385Z" fill="#e9ebec" />
    <circle cx="793" cy="393" r="5" fill="#e2e6e6" />
    <path
      d="M1210 681L1204 674L1210 669L1228 671L1245 681L1256 697L1267 727L1273 757"
      fill="none"
      stroke="#e6e5e8"
      strokeWidth="5"
      strokeLinejoin="round"
    />
    <g fill="none" stroke="#fcfcfd" strokeLinejoin="round" strokeLinecap="round">
      {rivers.map(([w, d]) => <path key={d} d={points(d)} strokeWidth={w} />)}
    </g>
    <g fill="none" stroke="#8e8d8f" strokeWidth="1.300" strokeDasharray="3 2">
      {borders.map((d) => <path key={d} d={points(d)} />)}
    </g>
    <g stroke="#7b7d78" strokeWidth="1.200" strokeLinejoin="round">
      {counties.map((c) => <path key={c.name} d={points(c.d) + "Z"} fill={c.fill} />)}
    </g>
    <text x="748" y="588" fontSize="15" fill="#7a9dc4">Massachusetts</text>
    <g fontSize="15" fill="#a3a2a5">
      <text x="550" y="813">Connecticut</text>
      <text x="863" y="774">Rhode</text>
      <text x="863" y="791">Island</text>
    </g>
    <rect x="298" y="1026" width="150" height="16" fill="#fff" opacity="0.700" />
    <text x="300" y="1038" fontSize="11" fill="#777" fontFamily='"Liberation Sans", sans-serif'>© OpenStreetMap contributors</text>
    <path d="M295 292.500H1360.500V1043.500H295" fill="none" stroke="#e6e5e7" />
  </svg>
);

/* ---------- scatter chart ---------- */

const population: [string, number, string][] = [
  ["Nantucket", 12, "#5680ab"],
  ["Dukes", 20, "#5079a3"],
  ["Franklin", 74, "#50759c"],
  ["Berkshire", 130, "#5079a3"],
  ["Hampshire", 164, "#698fb7"],
  ["Barnstable", 217, "#83afd3"],
  ["Hampden", 475, "#a7cce3"],
  ["Plymouth", 515, "#a9cee5"],
  ["Bristol", 559, "#dfd9cc"],
  ["Norfolk", 701, "#f6cc98"],
  ["Essex", 780, "#eed0a0"],
  ["Suffolk", 780, "#b05a4a"],
  ["Worcester", 822, "#86add8"],
  ["Middlesex", 1589, "#fbcf95"],
];

const yOf = (k: number) => 932 - k * 0.366;
const xOf = (i: number) => 1460 + i * 36.15;

const PopulationChart = () => (
  <svg viewBox="1368 292 589 755" role="img" aria-label="Total population by county" fontFamily={ui}>
    <text x="1695" y="307" fontSize="12" fill="#444" textAnchor="middle">County Name</text>
    <path d="M1442.500 314V967.500H1950" stroke="#f1f0f2" fill="none" />
    {[0, 200, 400, 600, 800, 1000, 1200, 1400, 1600].map((k) => (
      <g key={k}>
        <path d={`M1440 ${Math.round(yOf(k))}.500H1950`} stroke={k ? "#f1f0f2" : "#cfced0"} strokeDasharray={k ? undefined : "2 1"} />
        <text x="1435" y={Math.round(yOf(k)) + 4} fontSize="12" fill="#888" textAnchor="end">{k}K</text>
      </g>
    ))}
    {population.map(([name, k, colour], i) => (
      <g key={name}>
        <circle cx={xOf(i)} cy={yOf(k)} r="10" fill="#fff" fillOpacity="0.600" stroke={colour} strokeWidth="2" />
        <text transform={`translate(${xOf(i) + 4} 971) rotate(-90)`} fontSize="12" fill="#777" textAnchor="end">{name}</text>
      </g>
    ))}
    <text transform="translate(1389 668) rotate(-90)" fontSize="12" fill="#333">Population</text>
    <path d="M1380.500 603V600M1384.500 603V597M1388.500 603V594" stroke="#444" strokeWidth="2" />
  </svg>
);

/* ---------- application ---------- */

const menus = ["File", "Data", "Worksheet", "Dashboard", "Story", "Map", "Format", "Window", "Help"];

export default function App() {
  return (
    <>
      <GlobalStyle />
      <Page>
        <Window>
          <TitleBar>
            <AppMark><TableauMark size={16} mono="#3b87bd" /></AppMark>
            <WindowTitle>Tableau Public - Book2</WindowTitle>
            <WindowControls>
              <WindowButton aria-label="Minimize"><Svg w={12} h={12}><path d="M2 9H10" strokeWidth="2.500" /></Svg></WindowButton>
              <WindowButton aria-label="Restore"><Svg w={12} h={12}><path d="M1.500 4H8.500V10.500H1.500ZM1.500 5H8.500M3.500 4V1.500H10.500V8H8.500" /></Svg></WindowButton>
              <WindowButton aria-label="Close" $close><Svg w={12} h={12}><path d="M3 3L9 9M9 3L3 9" strokeWidth="1.800" /></Svg></WindowButton>
            </WindowControls>
          </TitleBar>

          <MenuBar>{menus.map((m) => <MenuItem key={m}>{m}</MenuItem>)}</MenuBar>

          <ToolBar>
            <ToolGroup $pad={8}><ToolButton aria-label="Start page"><TableauMark size={18} /></ToolButton></ToolGroup>
            <ToolGroup $pad={5} $gap={2}>
              <ToolButton aria-label="Undo"><BackIcon /></ToolButton>
              <ToolButton aria-label="Redo" $dim><ForwardIcon /></ToolButton>
              <ToolButton aria-label="Save"><SaveIcon /></ToolButton>
            </ToolGroup>
            <ToolGroup $pad={7}><ToolButton aria-label="New data source"><AddDataIcon /></ToolButton></ToolGroup>
            <ToolGroup $pad={7}>
              <ToolButton aria-label="New sheet"><AddSheetIcon /></ToolButton><Caret />
              <ToolButton aria-label="Duplicate"><DuplicateIcon /></ToolButton>
              <ToolButton aria-label="Clear sheet"><ClearIcon /></ToolButton><Caret />
            </ToolGroup>
            <ToolGroup $pad={7} $gap={1}>
              <ToolButton aria-label="Swap" $dim><SwapIcon /></ToolButton>
              <ToolButton aria-label="Sort ascending" $dim><SortAscIcon /></ToolButton>
              <ToolButton aria-label="Sort descending" $dim><SortDescIcon /></ToolButton>
            </ToolGroup>
            <ToolGroup>
              <ToolButton aria-label="Highlight"><MarkerIcon /></ToolButton><Caret />
              <ToolButton aria-label="Group" $dim><ClipIcon /></ToolButton><Caret $dim />
              <ToolButton aria-label="Labels" $dim><TextBoxIcon /></ToolButton>
              <ToolButton aria-label="Fix axes" $dim><PinIcon /></ToolButton>
              <ToolSelect aria-label="Fit" disabled />
            </ToolGroup>
            <ToolGroup $last>
              <ToolButton aria-label="Cards" $dim><CardsIcon /></ToolButton><Caret $dim />
              <ToolButton aria-label="Presentation mode"><PresentIcon /></ToolButton>
            </ToolGroup>
            <ShowMe><ShowMeIcon />Show Me</ShowMe>
          </ToolBar>

          <Workspace>
            <SideBar>
              <SideTabs>
                <SideTab $active>Dashboard</SideTab>
                <SideTab>
                  Layout
                  <svg width="6" height="8" viewBox="0 0 6 8" fill="#666" aria-hidden="true"><path d="M3 0L6 3H0ZM3 8L0 5H6Z" /></svg>
                </SideTab>
              </SideTabs>
              <PreviewArea><PreviewButton>Device Preview</PreviewButton></PreviewArea>
              <Section $bottom={20}>
                <SectionTitle>Size</SectionTitle>
                <SizeSelect>
                  <select aria-label="Size"><option>Automatic</option></select>
                </SizeSelect>
              </Section>
              <SheetSection>
                <SectionTitle>Sheets</SectionTitle>
                <SheetList>
                  <SheetItem><SheetIcon used />Population Density ...</SheetItem>
                  <SheetItem><SheetIcon used />Total Population by...</SheetItem>
                  <SheetItem><SheetIcon />Suffolk County Pop...</SheetItem>
                </SheetList>
              </SheetSection>
              <Section $last>
                <SectionTitle>Objects</SectionTitle>
                <ObjectGrid>
                  {["Horizontal", "Image", "Vertical", "Web Page", "Text", "Blank"].map((name) => (
                    <ObjectItem key={name}><Svg w={16} h={16}>{objectPaths[name]}</Svg>{name}</ObjectItem>
                  ))}
                </ObjectGrid>
                <Toggle>
                  <ToggleButton $on>Tiled</ToggleButton>
                  <ToggleButton>Floating</ToggleButton>
                </Toggle>
                <TitleCheck><input type="checkbox" />Show dashboard title</TitleCheck>
              </Section>
            </SideBar>

            <Board>
              <LegendTitle>Population Density (persons/sq mi)</LegendTitle>
              <LegendRow><span>101</span><LegendBar /><span>13,416</span></LegendRow>
              <Sheets>
                <MapFrame>
                  <SheetTitle>Population Density by County</SheetTitle>
                  <DensityMap />
                </MapFrame>
                <Divider />
                <ChartFrame>
                  <ChartHead>
                    <SheetTitle>Total Population by County (2015)</SheetTitle>
                    <OpenButton aria-label="Go to sheet"><OpenIcon /></OpenButton>
                  </ChartHead>
                  <PopulationChart />
                </ChartFrame>
              </Sheets>
            </Board>
          </Workspace>

          <TabRow>
            <Tab $w={126}><DataIcon />Data Source</Tab>
            <Tab $w={179}>Population Density by County</Tab>
            <Tab $w={194}>Total Population by County (201...</Tab>
            <Tab $w={194}>Suffolk County Population by Ag...</Tab>
            <Tab $w={99} $active><GridIcon />Dashboard 1</Tab>
            <Tab $w={31} $center aria-label="New worksheet"><NewTabIcon kind="sheet" /></Tab>
            <Tab $w={31} $center aria-label="New dashboard"><NewTabIcon kind="grid" /></Tab>
            <Tab $w={31} $center aria-label="New story"><NewTabIcon kind="story" /></Tab>
          </TabRow>

          <StatusRow>
            <StatusCell $w={124}>
              <UserIcon>
                <Svg w={14} h={14}><circle cx="7" cy="4" r="2.500" /><path d="M2 12.500V10C2 8 12 8 12 10V12.500Z" /></Svg>
              </UserIcon>
              <UserSelect aria-label="Account"><option>Luke Mich</option></UserSelect>
              <UserCaret />
            </StatusCell>
            <StatusCell $w={26} />
            <StatusCell $w={26} />
            <StatusCell $w={46} />
            <StatusCell $w={69} $spread>
              {["M1.500 1V7M7 1L3 4L7 7Z", "M6 1L2 4L6 7Z", "M2 1L6 4L2 7Z", "M6.500 1V7M1 1L5 4L1 7Z"].map((d) => (
                <svg key={d} width="8" height="8" viewBox="0 0 8 8" fill="#bbb" aria-hidden="true"><path d={d} stroke="#bbb" strokeWidth="0.500" /></svg>
              ))}
            </StatusCell>
            <StatusCell $w={66} $spread>
              <svg width="11" height="11" viewBox="0 0 11 11" fill="#bbb" aria-hidden="true">
                <path d="M0 0H3V3H0ZM4 0H7V3H4ZM8 0H11V3H8ZM0 4H3V7H0ZM4 4H7V7H4ZM8 4H11V7H8ZM0 8H3V11H0ZM4 8H7V11H4ZM8 8H11V11H8Z" />
              </svg>
              <svg width="11" height="11" viewBox="0 0 11 11" fill="#bbb" aria-hidden="true">
                <path d="M0 0H11V6H0ZM0 8H3V11H0ZM4 8H7V11H4ZM8 8H11V11H8Z" />
              </svg>
              <svg width="11" height="11" viewBox="0 0 11 11" fill="#5e5c5e" aria-hidden="true"><path d="M0 0H11V11H0Z" /></svg>
            </StatusCell>
          </StatusRow>

          <TaskBar>
            <StartButton aria-label="Start">
              <svg width="26" height="26" viewBox="0 0 26 26" fill="#fff" aria-hidden="true">
                <path d="M0 4L11 2.500V12.500H0ZM12 2.300L26 0V12.500H12ZM0 13.500H11V23.500L0 22ZM12 13.500H26V26L12 23.700Z" />
              </svg>
            </StartButton>
            {taskIcons.map((t) => (
              <TaskButton key={t.name} aria-label={t.name} $open={t.open} $front={t.front}>
                <svg width="30" height="30" viewBox="0 0 30 30" aria-hidden="true">{t.art}</svg>
              </TaskButton>
            ))}
            <Tray>
              <svg width="8" height="5" viewBox="0 0 8 5" fill="#fff" aria-hidden="true"><path d="M4 0L8 5H0Z" /></svg>
              <svg width="18" height="18" viewBox="0 0 18 18" aria-hidden="true">
                <path d="M3 1V17" stroke="#fff" strokeWidth="1.500" />
                <path d="M4 2H10V4H15V10H9V8H4Z" fill="#fff" />
                <circle cx="12" cy="12" r="5" fill="#d93a34" />
                <path d="M10 10L14 14M14 10L10 14" stroke="#fff" strokeWidth="1.500" />
              </svg>
              <svg width="12" height="18" viewBox="0 0 12 18" aria-hidden="true">
                <path d="M2 3H10V16H2ZM4.500 1.500H7.500" fill="none" stroke="#fff" strokeWidth="1.500" />
                <path d="M4 9H8V14H4Z" fill="#fff" />
              </svg>
              <svg width="16" height="14" viewBox="0 0 16 14" aria-hidden="true">
                <path d="M2 13V11M5 13V9M8 13V7M11 13V4M14 13V1" stroke="#fff" strokeWidth="2" />
              </svg>
              <svg width="18" height="18" viewBox="0 0 18 18" aria-hidden="true">
                <path d="M2 6H4L9 2V15L4 11H2Z" fill="#fff" />
                <circle cx="12" cy="12" r="4.500" fill="#fff" stroke="#d93a34" strokeWidth="2" />
                <path d="M9 9L15 15" stroke="#d93a34" strokeWidth="2" />
              </svg>
              <Clock>6:24 PM<br />1/27/2017</Clock>
            </Tray>
          </TaskBar>
        </Window>

        <Heading>Dashboard Layout (cont.)</Heading>
        <Paragraph>
          Next, drag the Total Population visualization to the right side of our screen. You can change how the dashboard is
          divided between our visualizations by hovering your mouse over the break between the charts and using the
          two-sided arrow cursor to click and drag the relative sizes.
        </Paragraph>
        <Footer>Intro to Tableau Public | DUSPViz | Spring 2017 | Page 28</Footer>
      </Page>
    </>
  );
}
